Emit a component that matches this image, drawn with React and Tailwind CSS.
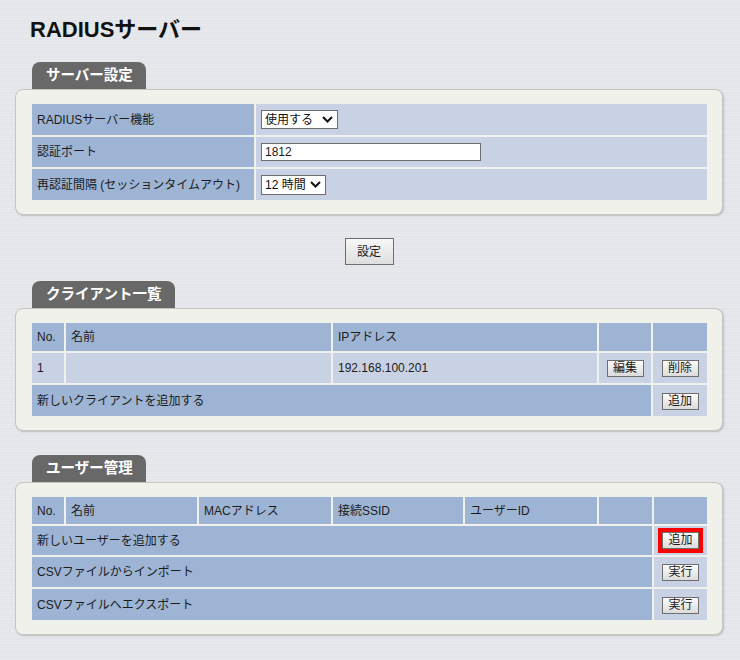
import React from 'react';

const FONT = "font-['Liberation_Sans','Noto_Sans_CJK_JP',sans-serif]";

// 見出しタブ付きのパネル
function Panel({ title, tabWidth, className = '', children }) {
  return (
    <div className={className}>
      <div
        className={`${tabWidth} ml-[17px] flex h-[27px] items-center rounded-t-[8px] bg-[#686868] pl-[14px] text-[14.5px] font-bold text-white`}
      >
        {title}
      </div>
      <div className="w-[708px] rounded-[8px] border border-[#c6c6c0] bg-[#f1f1eb] py-[12px] pl-[14px] pr-[13px] shadow-[1px_1px_2px_rgba(0,0,0,0.18)]">
        {children}
      </div>
    </div>
  );
}

function SmallButton({ children }) {
  return (
    <button className="h-[17px] w-[37px] border border-[#6e6e6e] bg-linear-to-b from-[#fbfbfb] to-[#dcdcdc] text-[12px] leading-[15px] text-[#1a1a1a]">
      {children}
    </button>
  );
}

function Chevron() {
  return (
    <svg width="11" height="7" viewBox="0 0 11 7" className="shrink-0">
      <polyline points="1,1 5.5,5.5 10,1" fill="none" stroke="#111" strokeWidth="2" />
    </svg>
  );
}

function FakeSelect({ label, width, height }) {
  return (
    <div
      className={`${width} ${height} flex items-center justify-between border border-[#6d6d6d] bg-white pl-[3px] pr-[4px] text-[12px] text-[#111]`}
    >
      <span>{label}</span>
      <Chevron />
    </div>
  );
}

const blue = 'bg-[#9db4d4]';
const light = 'bg-[#c9d1e4]';
const cell = 'px-[5px] py-0 text-left align-middle font-normal';

export default function App() {
  return (
    <div
      className={`${FONT} min-h-[660px] w-[740px] bg-[#e4e6ea] bg-[repeating-linear-gradient(180deg,#e6e8ec_0px,#e6e8ec_2px,#dde0e5_3px,#e8eaee_4px,#e2e4e8_6px)] pl-[15px] pt-[14px] pb-[20px] text-[#1c1c1c]`}
    >
      <h1 className="h-[32px] pl-[15px] text-[22px] font-bold leading-[32px] text-[#111]">
        RADIUSサーバー
      </h1>

      <Panel title="サーバー設定" tabWidth="w-[114px]" className="mt-[16px]">
        <table className="w-full table-fixed border-separate border-spacing-[2px] text-[12px]">
          <colgroup>
            <col className="w-[222px]" />
            <col />
          </colgroup>
          <tbody>
            <tr>
              <th className={`${cell} ${blue} h-[31px]`}>RADIUSサーバー機能</th>
              <td className={`${cell} ${light}`}>
                <FakeSelect label="使用する" width="w-[77px]" height="h-[19px]" />
              </td>
            </tr>
            <tr>
              <th className={`${cell} ${blue} h-[30px]`}>認証ポート</th>
              <td className={`${cell} ${light}`}>
                <div className="flex h-[18px] w-[220px] items-center border border-[#6d6d6d] bg-white pl-[3px] text-[12px]">
                  1812
                </div>
              </td>
            </tr>
            <tr>
              <th className={`${cell} ${blue} h-[31px]`}>再認証間隔 (セッションタイムアウト)</th>
              <td className={`${cell} ${light}`}>
                <FakeSelect label="12 時間" width="w-[65px]" height="h-[20px]" />
              </td>
            </tr>
          </tbody>
        </table>
      </Panel>

      <div className="mt-[23px] flex w-[708px] justify-center">
        <button className="h-[27px] w-[49px] border border-[#6e6e6e] bg-linear-to-b from-[#f7f7f7] to-[#dedede] text-[12px] text-[#1a1a1a]">
          設定
        </button>
      </div>

      <Panel title="クライアント一覧" tabWidth="w-[143px]" className="mt-[16px]">
        <table className="w-full table-fixed border-separate border-spacing-[2px] text-[12px]">
          <colgroup>
            <col className="w-[32px]" />
            <col className="w-[265px]" />
            <col className="w-[264px]" />
            <col className="w-[52px]" />
            <col />
          </colgroup>
          <tbody>
            <tr className="h-[28px]">
              <th className={`${cell} ${blue}`}>No.</th>
              <th className={`${cell} ${blue}`}>名前</th>
              <th className={`${cell} ${blue}`}>IPアドレス</th>
              <th className={`${cell} ${blue}`}></th>
              <th className={`${cell} ${blue}`}></th>
            </tr>
            <tr className="h-[30px]">
              <td className={`${cell} ${light}`}>1</td>
              <td className={`${cell} ${light}`}></td>
              <td className={`${cell} ${light}`}>192.168.100.201</td>
              <td className={`${light} p-0 text-center align-middle`}>
                <SmallButton>編集</SmallButton>
              </td>
              <td className={`${light} p-0 text-center align-middle`}>
                <SmallButton>削除</SmallButton>
              </td>
            </tr>
            <tr className="h-[31px]">
              <td colSpan={4} className={`${cell} ${blue}`}>新しいクライアントを追加する</td>
              <td className={`${light} p-0 text-center align-middle`}>
                <SmallButton>追加</SmallButton>
              </td>
            </tr>
          </tbody>
        </table>
      </Panel>

      <Panel title="ユーザー管理" tabWidth="w-[114px]" className="mt-[24px]">
        <table className="w-full table-fixed border-separate border-spacing-[2px] text-[12px]">
          <colgroup>
            <col className="w-[32px]" />
            <col className="w-[131px]" />
            <col className="w-[132px]" />
            <col className="w-[130px]" />
            <col className="w-[132px]" />
            <col className="w-[53px]" />
            <col />
          </colgroup>
          <tbody>
            <tr className="h-[27px]">
              <th className={`${cell} ${blue}`}>No.</th>
              <th className={`${cell} ${blue}`}>名前</th>
              <th className={`${cell} ${blue}`}>MACアドレス</th>
              <th className={`${cell} ${blue}`}>接続SSID</th>
              <th className={`${cell} ${blue}`}>ユーザーID</th>
              <th className={`${cell} ${blue}`}></th>
              <th className={`${cell} ${blue}`}></th>
            </tr>
            <tr className="h-[29px]">
              <td colSpan={6} className={`${cell} ${blue}`}>新しいユーザーを追加する</td>
              <td className={`${light} p-0 text-center align-middle`}>
                <span className="inline-flex border-4 border-[#ff0000] bg-white">
                  <SmallButton>追加</SmallButton>
                </span>
              </td>
            </tr>
            <tr className="h-[30px]">
              <td colSpan={6} className={`${cell} ${blue}`}>CSVファイルからインポート</td>
              <td className={`${light} p-0 text-center align-middle`}>
                <SmallButton>実行</SmallButton>
              </td>
            </tr>
            <tr className="h-[31px]">
              <td colSpan={6} className={`${cell} ${blue}`}>CSVファイルへエクスポート</td>
              <td className={`${light} p-0 text-center align-middle`}>
                <SmallButton>実行</SmallButton>
              </td>
            </tr>
          </tbody>
        </table>
      </Panel>
    </div>
  );
}
